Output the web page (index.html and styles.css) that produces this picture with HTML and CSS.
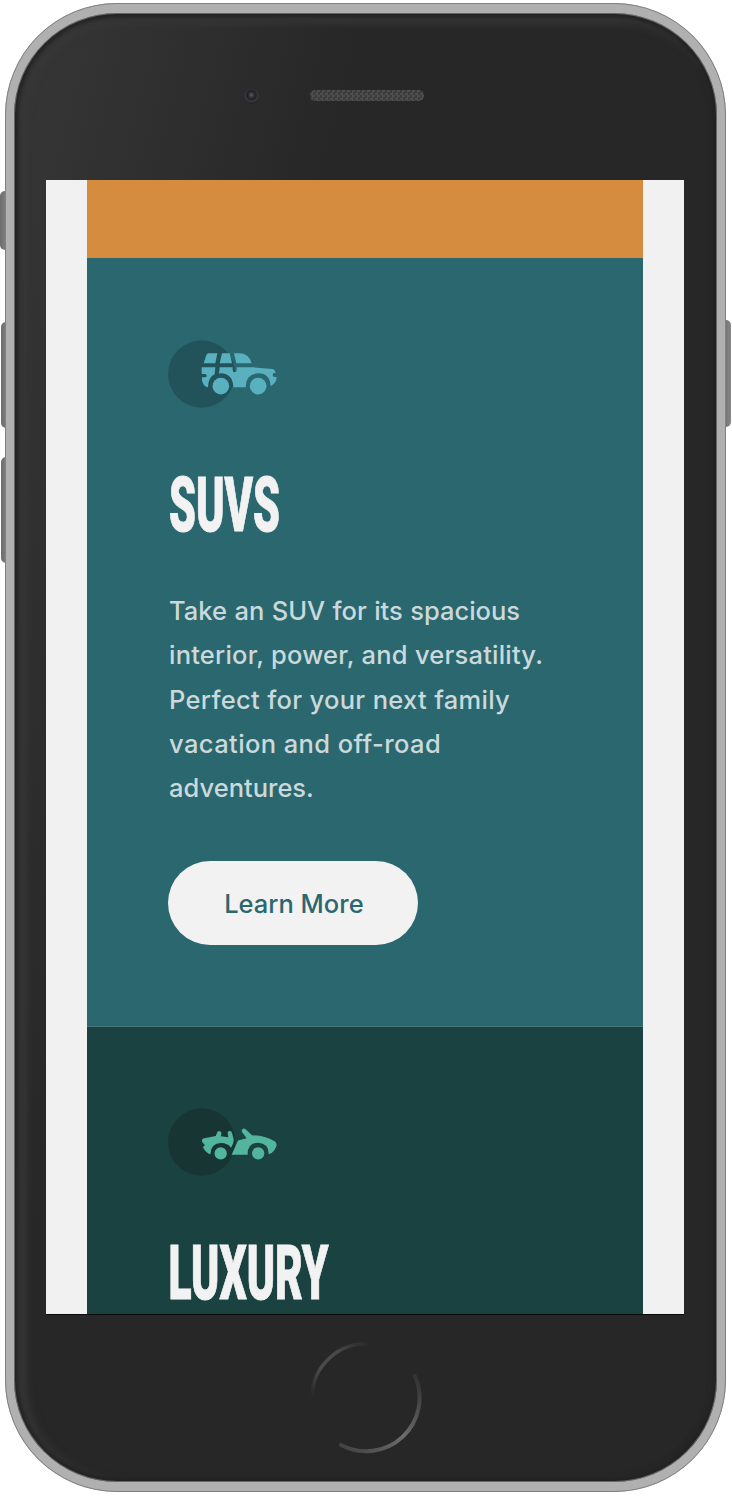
FILE: index.html
```html
<!DOCTYPE html>
<html lang="en">
<head>
<meta charset="utf-8">
<title>Cars</title>
<link rel="stylesheet" href="styles.css">
</head>
<body>
<div class="phone">
  <i class="key mute"></i><i class="key up"></i><i class="key down"></i><i class="key power"></i>
  <div class="body">
    <div class="top"><i class="camera"></i><i class="speaker"></i></div>
    <main class="screen">
      <section class="card sedan"></section>
      <section class="card suv">
        <svg class="icon" viewBox="40 29 330 205">
          <circle cx="141" cy="131" r="101" fill="#22535a"/>
          <g fill="#59b1bf">
            <path d="M147 99L155 74Q157 69 162 69H188L182 99ZM195 99L202 69H225L232 99ZM238 69H253Q283 69 291 99H245Z"/>
            <path d="M141 111H182L180 132Q161 140 160 171Q147 169 142 151V141H151Q156 141 156 136Q156 131 151 131H141ZM195 111H234V119Q234 126 240 126Q246 126 246 119V111H295L353 116Q361 117 363 128H358Q354 129 354 134Q354 139 359 140H366Q366 158 348 168Q346 129 311 129Q274 130 273 171H236Q235 130 198 129L193 130Z"/>
            <circle cx="198.500" cy="167.500" r="25"/><circle cx="310.500" cy="167.500" r="25"/>
          </g>
        </svg>
        <h2><svg width="120" height="66" viewBox="0 0 120 66"><text x="1" y="58" textLength="111" lengthAdjust="spacingAndGlyphs">SUVS</text></svg></h2>
        <p>
          <span class="l1">Take an SUV for its spacious</span>
          <span class="l2">interior, power, and versatility.</span>
          <span class="l3">Perfect for your next family</span>
          <span class="l4">vacation and off-road</span>
          <span class="l5">adventures.</span>
        </p>
        <a class="button">Learn More</a>
      </section>
      <section class="card luxury">
        <svg class="icon" viewBox="40 38 330 205">
          <circle cx="141" cy="140" r="101" fill="#173533"/>
          <g fill="#54b59f">
            <path d="M142 134Q143 129 149 129L183 122L188 111Q192 105 198 109Q202 111 200 117L198 123L221 126L219 115Q218 108 224 107Q230 106 232 112L237 132Q238 143 229 157Q219 143 199 143Q168 144 167 177Q154 173 146 158V153L151 150L142 139Z"/>
            <path d="M231 178L249 138Q251 134 256 134L276 129L262 110Q260 104 264 101Q268 97 273 102L292 120Q329 120 360 138Q366 141 366 150Q361 171 342 177Q343 144 311 142Q278 143 279 178Z"/>
            <circle cx="198" cy="174" r="18.500"/><circle cx="310.500" cy="174" r="18.500"/>
          </g>
        </svg>
        <h2><svg width="170" height="66" viewBox="0 0 170 66"><text x="0.500" y="58" textLength="160" lengthAdjust="spacingAndGlyphs">LUXURY</text></svg></h2>
      </section>
    </main>
    <div class="bottom">
      <svg width="114" height="114" viewBox="0 0 114 114" fill="none" stroke-linecap="round">
        <defs>
          <linearGradient id="a" x1="0" y1="1" x2="1" y2="0"><stop offset="0" stop-color="#272727"/><stop offset=".35" stop-color="#4b4b4b"/><stop offset=".65" stop-color="#484848"/><stop offset="1" stop-color="#272727"/></linearGradient>
          <linearGradient id="b" x1="0" y1="1" x2="1" y2="0"><stop offset="0" stop-color="#404040"/><stop offset=".5" stop-color="#6c6c6c"/><stop offset="1" stop-color="#303030"/></linearGradient>
        </defs>
        <path d="M2 56A54 54 0 0 1 60 3" stroke="url(#a)" stroke-width="3.500"/>
        <path d="M105 35A53.500 53.500 0 0 1 31 104" stroke="url(#b)" stroke-width="4"/>
      </svg>
    </div>
  </div>
</div>
</body>
</html>
```
FILE: styles.css
```css
* { box-sizing: border-box; }
body { margin: 0; width: 732px; height: 1496px; background: #fff; overflow: hidden; }
.phone { position: relative; width: 732px; height: 1496px; padding: 3px 6px 4px 5px; }
.key { position: absolute; background: linear-gradient(90deg, #6c6c6c, #888); width: 8px; border-radius: 5px 0 0 5px; }
.mute { left: 0; top: 191px; height: 59px; }
.up { left: 1px; top: 322px; height: 106px; }
.down { left: 1px; top: 457px; height: 106px; }
.power { left: 723px; top: 320px; height: 107px; border-radius: 0 5px 5px 0; }
.body {
  position: relative; width: 721px; height: 1489px; padding: 0 31px 0 32px;
  border: 10px solid #b0b0b0; border-left-width: 9px; border-right-width: 9px;
  border-radius: 112px; background: linear-gradient(105deg, #363636 0, #333 8%, #272727 32%, #272727 100%);
  box-shadow: inset 0 0 0 1px #666, inset 0 0 5px 4px #202020, inset 6px 4px 9px 6px #383838;
}
.body::after { content: ""; position: absolute; inset: -10px -9px; border: 1px solid #808080; border-radius: 112px; }
.top { height: 167px; display: flex; align-items: flex-start; padding: 76px 0 0 198px; }
.camera { width: 15px; height: 15px; border-radius: 50%; background: radial-gradient(circle at 50% 40%, #606065 0, #38383c 18%, #202024 38%, #39393e 54%, #242427 72%); }
.speaker { width: 114px; height: 11px; margin: 1px 0 0 51px; border-radius: 5px; background: repeating-conic-gradient(#4d4d4d 0 25%, #3c3c3c 0 50%) 0 0 / 5px 5px; }
.screen { width: 638px; height: 1134px; padding: 0 41px; background: #f1f1f1; overflow: hidden; box-shadow: 0 1px 0 #080808; }
.card { width: 556px; padding: 81.700px 82px 0 81.400px; }
.sedan { height: 78px; padding: 0; background: #d68c3f; }
.suv { height: 768px; background: #2b676e; }
.luxury { height: 300px; background: #1a4241; border-top: 1px solid #497675; padding-top: 80.700px; }
.icon { display: block; width: 110px; height: 68.300px; }
h2 { margin: 65px 0 0; height: 66px; }
h2 svg { display: block; overflow: visible; }
h2 text { font: 900 76px Roboto, sans-serif; fill: #f2f2f2; stroke: #f2f2f2; stroke-width: 1px; }
p { margin: 50px 0 0 .7px; color: #cad9db; font: 500 25.500px/44.300px Inter, sans-serif; }
p span { display: block; white-space: nowrap; text-align-last: justify; }
.l1 { width: 351px; }
.l2 { width: 374px; letter-spacing: .2px; }
.l3 { width: 341px; letter-spacing: .3px; }
.l4 { width: 271px; letter-spacing: .4px; }
.l5 { width: 145px; }
.button { display: flex; align-items: center; justify-content: center; width: 250px; height: 84px; margin-top: 50.500px; padding: 2px 0 0 1px; border-radius: 42px; background: #f2f2f2; color: #2b676e; font: 500 25.500px Inter, sans-serif; }
.bottom { height: 168px; display: flex; justify-content: center; padding: 27px 0 0 2px; }
```
